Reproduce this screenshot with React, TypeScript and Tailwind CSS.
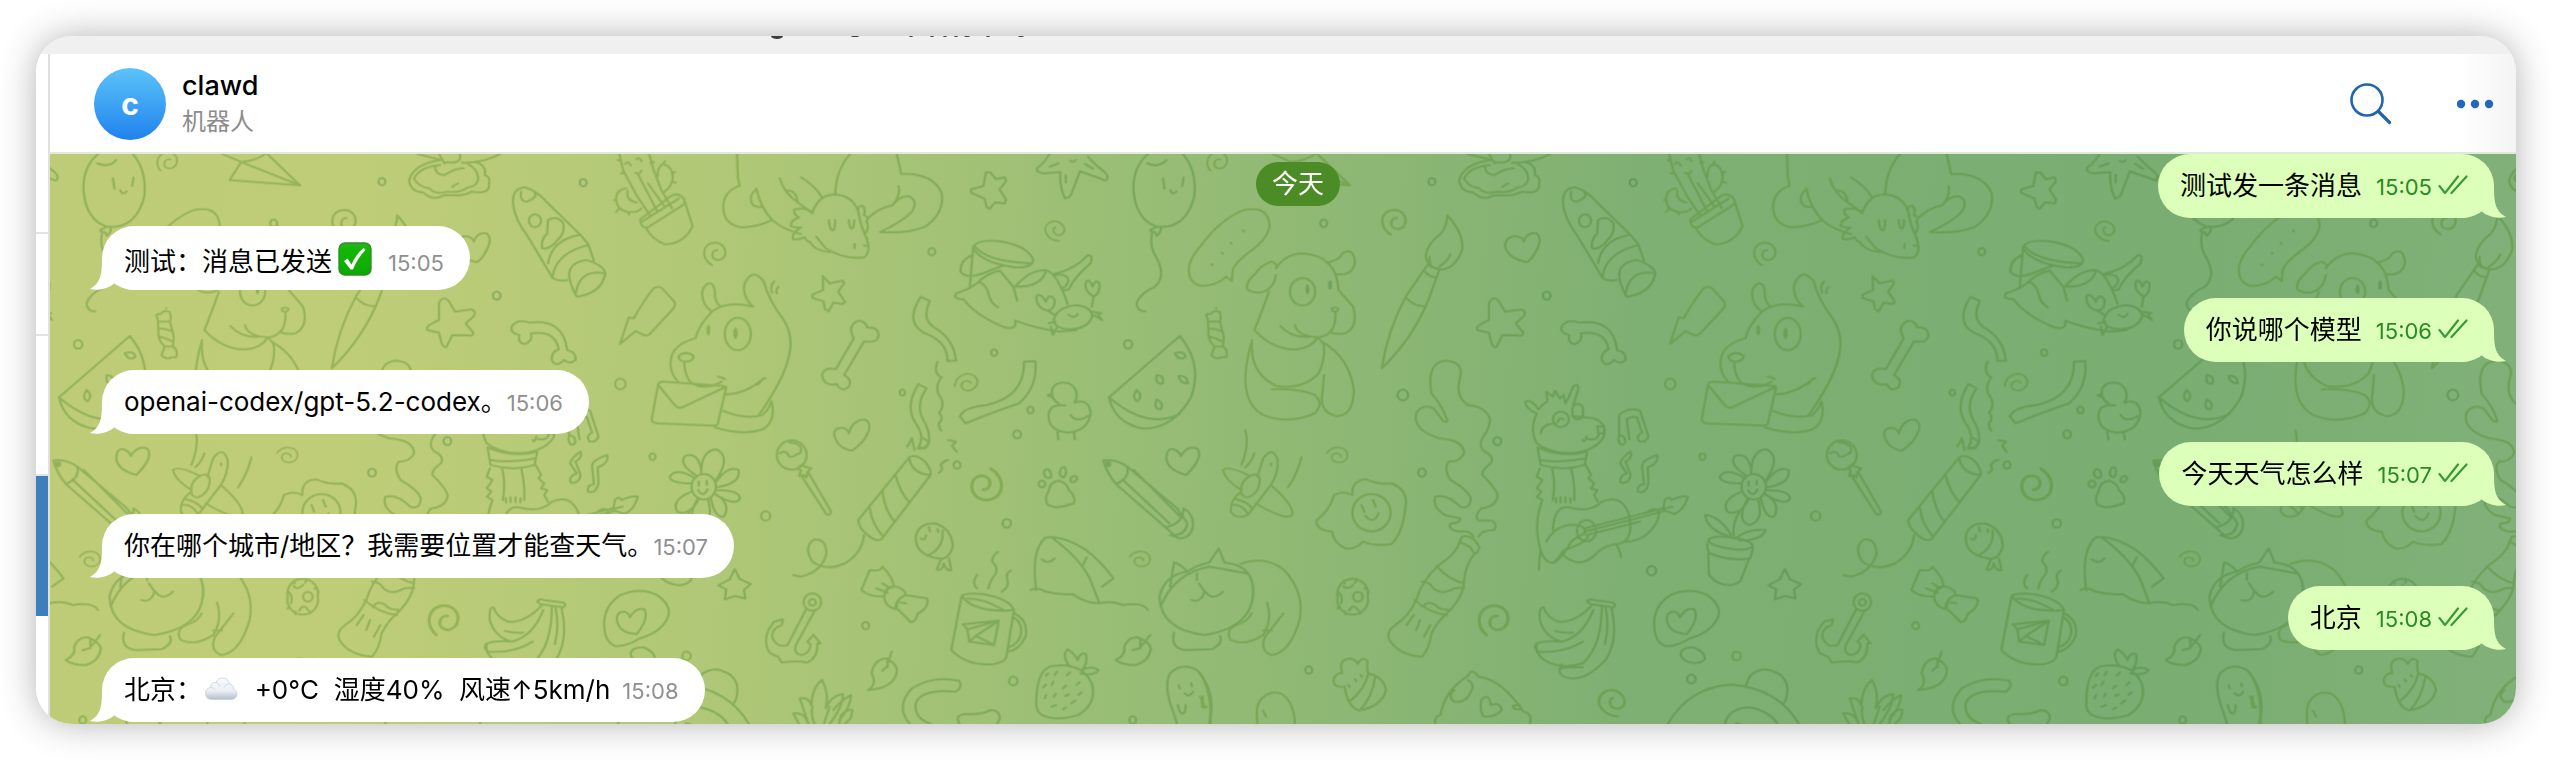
import type { ReactNode } from 'react';
import { clsx } from 'clsx';

type Message = {
  id: number;
  out?: boolean;
  time: string;
  body: ReactNode;
  // a closing full stop already brings its own space before the time
  tight?: boolean;
};

function CheckEmoji() {
  return (
    <svg role="img" aria-label="✅" viewBox="0 0 34 34" className="mr-1 ml-1.5 inline-block size-[34px] align-[-5px]">
      <defs>
        <linearGradient id="check-fill" x1="0" y1="0" x2="0" y2="1">
          <stop offset="0" stopColor="#2fae2a" />
          <stop offset="0.2" stopColor="#12b800" />
          <stop offset="1" stopColor="#0ea800" />
        </linearGradient>
      </defs>
      <rect x="1" y="1" width="32" height="32" rx="6" fill="url(#check-fill)" stroke="#2c8f2a" strokeWidth="1.4" />
      <path d="M6 19L9.500 16.500L13.500 22.500C16.500 15.500 20.500 10 25.500 6L27.500 8C22 13.500 18 20 15 27.500H12.500Z" fill="#fff" />
    </svg>
  );
}

function CloudEmoji() {
  return (
    <svg role="img" aria-label="☁️" viewBox="0 0 34 24" className="mx-0.5 inline-block h-6 w-[34px] align-[-2px]">
      <defs>
        <linearGradient id="cloud-fill" x1="0" y1="0" x2="0" y2="1">
          <stop offset="0" stopColor="#f8fafc" />
          <stop offset="0.6" stopColor="#eceff4" />
          <stop offset="1" stopColor="#b3bdcc" />
        </linearGradient>
      </defs>
      <path
        d="M8 22.500C3.500 22.500 1.500 20 1.500 16.500C1.500 13 3.500 11 6.500 10.500C6.500 7 9 5 12 5.500C13 2.500 15.500 1 18.500 1C22.500 1 25 3.500 25.500 7C29.500 7.500 29.500 10.500 29 12C31.500 12.500 33 14.500 33 17C33 20.500 30.500 22.500 27 22.500Z"
        fill="url(#cloud-fill)"
        stroke="#c9d0da"
        strokeWidth="0.8"
      />
      <path d="M12 5.500C14.500 6 15.500 7.500 15.500 9.500M25.500 7C23 6.500 20.500 8 20 10.500M6.500 10.500C8.500 10.500 10 11 11 13" fill="none" stroke="#d3d9e2" strokeWidth="1" />
    </svg>
  );
}

const MESSAGES: Message[] = [
  { id: 1, out: true, time: '15:05', body: '测试发一条消息' },
  { id: 2, time: '15:05', body: <>测试：消息已发送<CheckEmoji /></> },
  { id: 3, out: true, time: '15:06', body: '你说哪个模型' },
  { id: 4, time: '15:06', body: 'openai-codex/gpt-5.2-codex。', tight: true },
  { id: 5, out: true, time: '15:07', body: '今天天气怎么样' },
  { id: 6, time: '15:07', body: '你在哪个城市/地区？我需要位置才能查天气。', tight: true },
  { id: 7, out: true, time: '15:08', body: '北京' },
  { id: 8, time: '15:08', body: <>北京：<CloudEmoji />{'  +0°C  湿度40%  风速↑5km/h'}</> },
];

// Wallpaper doodles. One tile is 2744 units wide and repeats sideways.
const TILE = 2744;

const DOODLES: { x: number; y: number; d: string[] }[] = [
  {
    x: 0,
    y: 0,
    d: [
      // cactus
      'M50 40L60 90L95 165L130 225M128 40L140 90L160 150L188 205M68 145Q40 150 42 180Q45 212 75 216Q100 218 108 205M72 152Q66 180 95 188M150 110Q150 80 165 72Q190 78 190 112Q188 140 168 155M100 105L150 215M125 130L168 198M65 72Q74 60 80 76M92 98Q102 106 108 92M95 58Q104 48 108 64M36 180h8M48 208l-6 8M75 216v8M188 100l8-4M190 125l8 3M165 72l4-8M46 60l8 3M55 100l8 0M132 70l8-4',
      'M105 238L185 168Q205 155 220 178Q225 190 214 197L125 262Q106 266 105 238ZM108 246L205 176M120 264Q135 298 170 313Q220 312 242 258L222 188',
      // axolotl
      'M358 40L360 110L365 137Q320 155 322 205Q325 255 370 262Q410 262 450 240M408 145Q420 205 450 240Q480 270 525 282M410 148Q390 160 395 185Q400 205 425 200M470 115Q480 160 520 190L555 220M525 112Q565 140 580 172M490 152Q512 150 516 184M615 165Q615 90 655 40M775 40L787 102Q870 98 893 160Q900 220 850 260Q800 282 732 276Q790 245 815 215Q832 185 810 170Q785 165 765 195Q725 205 700 235M780 138Q786 165 765 195',
      'M555 218Q570 165 612 163Q660 165 675 215Q680 255 695 290Q710 335 690 352Q640 360 590 325L565 290M555 218Q540 200 508 208Q505 225 520 232Q498 240 498 258Q515 265 525 262Q500 280 504 297Q520 300 535 292Q540 305 548 305Q560 332 600 336M598 240Q600 275 610 270Q616 260 614 240M650 240Q652 270 660 265Q665 255 664 240M675 215Q670 200 685 197Q695 205 690 225Q704 232 696 245Q705 260 694 278M665 312v12M690 316l6 2',
      // stars
      'M1008 98L1020 97L1034 117L1058 112L1061 124L1044 148L1061 178L1058 190L1032 187L1018 207L1010 200L1005 176L970 158L970 148L1002 138Z',
      'M582 408L600 430L634 422L638 430L622 455L640 485L634 492L610 488L597 514L588 508L584 484L555 474L555 464L583 450Z',
      // starfish
      'M1175 40Q1165 65 1142 84Q1138 98 1160 100L1203 96Q1200 140 1215 175Q1230 172 1232 160L1254 94Q1300 112 1322 122Q1332 110 1320 98Q1290 70 1275 50M1175 80L1198 70M1217 105v22M1288 86L1268 72M1228 62Q1236 70 1243 60',
      // balloon
      'M1432 42Q1392 80 1394 150Q1400 240 1455 260Q1530 270 1553 170Q1560 90 1523 42M1430 70Q1460 85 1480 60M1471 115L1475 146M1525 113L1521 138M1490 150Q1496 168 1507 154M1455 260L1438 270Q1440 278 1450 276L1455 287Q1468 275 1465 260M1442 282Q1435 320 1455 355Q1480 410 1450 440Q1410 460 1402 490Q1404 515 1425 514',
      // lightning
      'M52 612L75 532L88 535Q115 480 140 445Q155 435 165 448L194 485Q198 495 192 505L130 582Q120 590 108 582L93 573Z',
      // dog with letter
      'M205 727Q175 690 188 645Q200 610 250 594Q255 560 292 515Q330 480 400 500M292 515Q262 490 268 450Q280 420 295 435Q302 450 300 470Q305 495 318 500M400 500Q370 470 378 430Q400 380 428 425Q440 480 480 540Q505 585 495 640Q485 710 415 825M205 648Q225 630 245 648Q240 668 218 664Q205 660 205 648ZM220 666Q220 700 235 725Q270 755 318 725M308 710Q320 712 326 718M330 763Q380 762 428 715L432 716M410 734L418 728M450 458Q442 440 455 424M462 460Q458 450 466 440',
      'M326 582A33 47 0 1 0 394 582A33 47 0 1 0 326 582M135 838L152 732Q155 725 165 725L325 738Q332 740 328 750L308 850Q305 858 296 857L150 850Q135 848 135 838ZM152 735L195 795Q205 808 218 800L326 742M322 813Q380 840 425 825Q440 810 448 784Q460 840 430 865Q380 890 300 862',
      // bone
      'M663 595Q645 560 672 543Q692 540 698 562Q728 560 728 588Q724 610 690 604L638 705Q660 720 650 740Q632 760 618 732Q585 740 580 705Q585 680 616 688Z',
      // heart
      'M612 885Q612 860 635 864Q648 868 650 880Q660 840 690 838Q708 845 702 872Q690 910 658 932Q620 925 612 885Z',
      // tambourine fox
      'M975 320Q990 295 1050 305Q1120 320 1132 360Q1130 385 1085 382Q1000 370 975 325ZM978 318Q1010 365 1125 370M975 325L966 445M972 346Q940 360 942 395Q955 418 1000 400L1055 376M930 462Q920 475 950 478Q985 530 1060 563Q1090 570 1085 542Q1140 565 1200 575L1245 570M930 460Q960 450 985 430Q1010 400 1045 392L1080 440L1090 482M990 425Q1010 435 1015 460Q1020 490 1040 502M1085 440Q1120 390 1165 390Q1195 400 1222 492M1085 440Q1150 442 1165 395M1185 402Q1240 390 1275 345Q1290 345 1282 370Q1240 410 1225 448L1210 452M1190 405Q1220 400 1224 420Q1220 440 1208 445',
      'M1185 540Q1195 500 1245 495Q1285 500 1286 530Q1275 565 1230 568Q1190 568 1185 540ZM1225 524Q1238 538 1248 522M1188 525L1170 512Q1140 505 1140 470Q1150 455 1165 485Q1175 455 1188 480Q1190 505 1172 512M1285 500L1290 470Q1262 450 1270 425Q1280 415 1287 440Q1295 415 1305 430Q1308 460 1290 470M1286 515L1310 520M1290 525L1312 540L1300 520M1190 545L1172 550M1195 560L1183 585L1178 560',
      // ribbons
      'M838 470L862 483Q840 535 870 560Q925 595 930 662L908 663Q908 610 860 585Q790 555 838 470Z',
      'M832 732L853 745Q820 800 850 850Q870 900 850 925L832 922Q850 890 825 850Q795 800 832 732ZM882 665Q870 700 892 712Q870 745 892 775Q900 800 886 818Q900 835 885 850Q886 865 892 872',
      'M1108 665L1137 663Q1145 740 1095 790Q1030 815 955 850L940 828Q955 800 1010 795Q1110 770 1108 665Z',
      // chick
      'M1198 790Q1175 775 1182 745Q1195 722 1225 730Q1250 745 1245 775L1240 788Q1280 775 1282 820Q1275 875 1220 878Q1170 870 1172 825Q1175 790 1215 796M1182 762L1170 766L1182 772M1230 825Q1245 850 1275 828M1195 876L1198 898M1238 876L1241 898',
      // watermelon
      'M1515 588L1330 772Q1345 850 1420 866Q1500 865 1545 770Q1575 670 1515 588ZM1330 772Q1430 870 1515 822M1502 640Q1525 630 1530 650Q1515 665 1502 640ZM1455 705Q1475 705 1470 730Q1450 735 1455 705ZM1512 708Q1535 705 1536 730Q1515 730 1512 708ZM1402 750Q1420 765 1405 784Q1388 775 1402 750ZM1455 778Q1475 790 1465 808Q1445 808 1455 778Z',
    ],
  },
  {
    x: 0,
    y: 900,
    d: [
      // lollipop
      'M462 45A39 44 0 1 0 540 45A39 44 0 1 0 462 45M470 40Q480 30 490 40Q495 60 515 42Q530 40 524 20Q510 5 495 8M515 85L525 92L520 108L532 105L540 112L542 96L552 85L535 80L528 74ZM528 110L590 220Q600 232 604 215L545 98',
      // firecracker
      'M675 240L808 52Q825 40 850 65Q870 95 862 108L735 298Q720 308 695 280Q675 260 675 240ZM808 55Q815 100 862 105M772 105Q785 160 810 188M738 155Q745 215 770 245M705 205Q710 250 740 290M690 285Q685 340 640 370Q590 395 555 365Q530 320 560 298Q590 295 592 340Q580 395 525 410L505 405M803 20L815 -5L822 30M830 25Q850 30 860 5L845 -5M910 0L930 5L920 18L932 35M885 98Q900 90 890 75Q900 60 910 60',
      // beetle
      'M825 300Q825 250 875 250Q920 265 922 320Q915 350 895 357Q830 350 825 300ZM895 272Q900 320 860 345M838 295Q850 305 852 285M860 262l2 12M882 268l2 8M892 355L880 388Q895 395 898 370Q905 395 918 390L912 355',
      // bow
      'M683 450L705 390Q735 395 738 380Q765 410 768 440Q750 440 742 470Q700 470 683 450ZM742 470Q745 435 775 440Q800 450 798 465Q770 480 772 507Q745 500 742 470ZM798 465L855 475Q862 500 830 522Q825 545 812 547Q790 520 775 505Q775 475 798 465M722 445L752 458M738 430L758 445M785 488L800 490',
      // anchor
      'M532 486A23 26 0 1 0 578 486A23 26 0 1 0 532 486M546 487A9 10 0 1 0 564 487A9 10 0 1 0 546 487M540 505L490 615Q460 625 450 590Q448 565 475 555L478 538L455 545L440 570Q425 610 445 640L465 650L475 668Q520 660 540 668Q570 655 568 610L576 610L558 584L542 605L550 612Q550 640 525 645Q505 640 512 615L562 510',
      // steaming mug
      'M945 468L918 630Q960 680 1030 672Q1060 665 1062 650L1082 510Q1070 475 1000 462Q955 458 945 468ZM945 468Q980 520 1078 510M960 475Q1000 475 1052 508M1082 520Q1120 540 1112 590Q1095 630 1066 635M1078 530Q1105 545 1100 585Q1090 615 1068 622M948 553L1042 542L1030 615L965 605L960 568ZM960 568L1042 542L982 588L965 605M982 588L1030 615M985 445Q970 430 985 405M1015 445Q1020 420 1035 400Q1040 380 1025 365Q1025 345 1040 336M1050 455Q1070 440 1065 420Q1058 400 1074 392',
      // leaves
      'M700 750Q725 735 710 700Q715 660 745 655Q780 670 775 700Q765 745 700 750ZM762 635L750 680L738 692M750 655L752 682',
      'M1348 660Q1375 645 1370 620Q1380 590 1405 592Q1435 605 1440 625Q1435 665 1400 675Q1365 675 1348 660ZM1438 585L1410 625L1392 630M1412 600L1412 625',
      // pineapple top
      'M520 852L505 820Q535 815 545 852L522 775Q545 770 552 795Q555 740 580 720Q600 760 590 805Q605 765 635 762Q635 800 600 852M585 852L600 800M610 810Q630 780 656 765Q655 800 625 840M625 852L630 825Q650 805 660 810L655 835L640 852M560 852Q550 820 555 800',
      // candy cane
      'M865 852Q820 835 825 790Q840 745 930 755Q950 740 938 722Q870 705 815 745Q770 800 810 852M940 852Q925 825 955 822Q1000 825 1020 810Q1045 810 1045 835L1038 852',
      // strawberry
      'M1140 790Q1140 690 1180 678Q1260 665 1285 730Q1300 790 1250 825Q1190 845 1155 825Q1140 815 1140 790ZM1228 680Q1205 645 1222 628Q1240 640 1248 660Q1255 635 1270 642Q1275 670 1260 690Q1285 675 1303 690Q1295 708 1255 700M1165 708l6-8M1188 705l6-10M1220 706l8-9M1158 742l8-8M1180 735l5-10M1210 745l8-8M1245 735l8-8M1162 775l4-10M1186 770l5-9M1215 768l10-5M1250 765l8-8M1180 800l12-5M1210 808l8-6M1232 790l10-8',
      // paw
      'M1170 195Q1160 175 1172 155Q1175 125 1200 122Q1222 130 1225 150Q1245 170 1238 190Q1215 200 1190 202ZM1160 102Q1160 85 1172 88Q1182 98 1178 112Q1165 118 1160 102ZM1202 95Q1205 78 1215 82Q1222 100 1212 112Q1200 110 1202 95ZM1230 115Q1242 100 1247 115Q1242 130 1230 125ZM1146 132A9 10 0 1 0 1164 132A9 10 0 1 0 1146 132',
      // pencil
      'M1315 62Q1345 55 1378 80L1508 205L1535 250Q1530 285 1500 285L1478 262L1348 132Q1325 100 1315 62ZM1378 80Q1385 115 1348 132M1365 118L1488 250M1395 90L1515 228M1478 262Q1525 250 1525 205Q1550 220 1550 255Q1545 295 1515 295L1490 285',
      // heart
      'M1480 58Q1480 22 1500 28Q1515 35 1518 48Q1535 15 1560 25Q1580 50 1532 105Q1485 90 1480 58Z',
      // tent
      'M1140 450Q1125 330 1165 292Q1210 285 1270 330Q1310 365 1342 415L1312 440M1180 292Q1250 350 1280 415L1305 490M1125 450Q1145 440 1165 455Q1200 465 1235 462Q1270 490 1305 490Q1340 480 1365 495Q1420 485 1432 510M1155 358Q1170 375 1188 355M1262 375L1272 352',
      // sleeping cat
      'M1490 440L1500 368Q1515 370 1535 395Q1560 375 1592 368L1617 325L1632 368Q1700 375 1706 440Q1715 560 1580 585Q1465 570 1462 470Q1475 405 1535 395M1465 500Q1500 400 1592 380L1690 400M1545 480Q1570 490 1580 455L1565 430M1582 455Q1600 485 1628 455M1560 400v20M1500 578Q1490 625 1530 630L1600 627Q1630 610 1620 588',
      // ghost
      'M1508 852Q1500 820 1490 790Q1475 730 1490 700Q1520 665 1560 690Q1600 740 1598 810L1592 852M1510 795Q1515 825 1525 820Q1532 810 1530 795M1512 735l3 10M1545 730l2 8M1528 760Q1540 775 1550 755M1575 770Q1570 810 1585 800',
    ],
  },
  {
    x: 1568,
    y: 0,
    d: [
      // paper plane
      'M392 136L208 120L238 66ZM392 136L305 40M238 66Q280 60 300 42M238 66L190 42',
      // loaf
      'M0 320Q55 235 115 210Q180 195 182 260Q175 300 130 335Q85 375 85 395L83 423L68 410Q40 440 0 437Q-35 425 -28 375Q-20 345 0 320ZM112 271l3 3M80 308l3 3M57 338l3 3M30 373l3 3',
      // sweet
      'M20 535Q10 520 28 522Q35 510 50 515Q58 530 52 545L62 590L60 620Q75 630 68 652Q55 650 50 655Q35 655 30 645Q35 630 38 620Q20 600 22 575ZM22 545L52 545M22 565Q40 565 60 575M25 590Q45 595 60 605M38 620L60 620',
      // sitting dog
      'M198 385Q225 340 270 340Q315 345 332 368M198 385Q205 370 185 365Q160 375 145 400Q115 430 125 450Q160 470 185 440Q195 430 198 405M332 368Q365 360 372 340Q400 320 405 365Q400 410 355 402M332 368Q358 390 362 450Q385 480 400 500Q415 560 380 580Q350 585 340 575Q355 560 354 520M180 455Q160 520 142 570Q190 630 250 628Q290 625 308 592M345 505Q360 500 362 508Q355 520 345 512ZM248 555Q255 590 310 592Q330 590 345 570M210 558Q240 595 285 590M136 610Q130 700 200 738Q270 750 310 700Q330 650 322 610L308 592M136 600Q90 780 165 825Q230 855 300 820Q325 790 300 765Q260 745 188 748M318 605Q390 650 402 750Q400 830 355 828Q310 815 320 760L324 705M235 455A33 41 0 1 0 301 455A33 41 0 1 0 235 455',
      // brush
      'M646 226Q690 280 685 330Q665 390 628 388Q590 380 590 345Q595 310 630 280Q645 260 646 226ZM605 382Q598 360 600 350M625 380Q650 360 654 342M594 375L625 390L622 400L600 470Q560 590 475 685Q490 570 540 465L585 390ZM585 392Q600 412 618 412M540 475Q560 500 586 498',
      // heart, star
      'M797 320Q797 290 825 288Q845 292 846 305Q855 275 880 280Q895 295 882 325Q865 365 852 366Q805 355 797 320Z',
      'M755 490Q765 465 780 482L797 515L840 508Q855 515 845 530L825 550L845 578Q845 590 830 586L790 585L775 620Q768 625 762 610L755 578L725 570Q720 560 735 552L755 540Z',
      // canelloni
      'M950 200Q942 145 980 142Q1010 150 1040 190L1125 285L1145 312L1160 362M950 200Q955 240 985 285L1050 410M970 155Q965 185 985 185Q1015 170 1005 158M990 242A16 19 0 1 0 1022 242A16 19 0 1 0 990 242M1040 240Q1065 225 1080 250Q1085 280 1065 300Q1045 330 1025 325Q1020 300 1038 280ZM1040 370Q1050 300 1120 285M1052 410Q1060 340 1145 315M1050 412Q1065 425 1090 420M1095 400Q1100 365 1140 360Q1185 375 1190 400Q1180 460 1115 470Q1095 430 1095 400ZM1190 400Q1120 385 1112 465',
      // curved bone
      'M992 548Q1080 535 1090 630Q1115 635 1112 660Q1095 675 1082 660Q1060 685 1050 660Q1048 635 1068 628Q1060 570 996 580Q1000 605 980 612Q960 610 965 585Q940 580 945 560Q960 535 992 548Z',
      // smoke
      'M645 838Q650 850 635 842L610 805Q580 790 565 820Q555 870 625 895Q690 900 690 940Q680 965 650 965Q635 985 655 1020Q700 1050 708 1075Q705 1110 680 1100Q645 1060 615 1070Q605 1100 640 1125L680 1135Q680 1150 655 1150Q645 1170 680 1175Q705 1170 715 1190M645 838Q635 800 605 760Q590 670 640 662Q690 665 680 710Q665 770 700 795Q750 800 758 840Q755 870 740 890Q725 920 745 935Q770 950 760 970Q735 990 738 1005Q770 1040 778 1065Q775 1100 735 1105Q715 1130 728 1142L760 1142Q780 1150 768 1170Q735 1170 728 1190',
      // llama with guitar
      'M880 820Q860 870 880 910Q920 945 985 938Q1040 925 1055 890Q1065 850 1030 835L975 828M880 820Q850 805 850 785Q865 775 885 808Q895 790 908 785L905 755L922 770L928 752L940 775L950 765L955 790M958 785L975 740Q990 725 988 750L975 795M922 838A20 22 0 1 0 964 838A20 22 0 1 0 922 838M974 815A14 17 0 1 0 1000 815A14 17 0 1 0 974 815M935 845Q940 830 950 838M890 880Q895 850 930 850M1010 890Q1005 910 1000 900M1008 895Q1035 905 1042 885L1038 858M1042 860h14v20h-12',
      'M882 922Q950 955 1012 935L1005 975Q950 995 890 975ZM890 960Q950 970 1005 955M920 985Q930 1030 922 1080M970 985Q980 1030 978 1080M930 1075v12M942 1072v14M955 1072v14M968 1075v12M888 985L880 1010L895 1020L880 1045L892 1055L880 1070L895 1080M1008 975L1022 1005L1015 1015L1030 1030L1022 1045L1038 1050L1030 1065L1040 1085M895 1080Q870 1150 890 1230Q885 1270 886 1288M890 1230Q900 1270 925 1268Q940 1250 950 1230Q1000 1215 1015 1190',
      'M922 1170Q925 1095 965 1102Q1020 1120 1050 1085Q1100 1060 1120 1120Q1135 1195 1100 1210Q1060 1215 1040 1235Q1010 1275 980 1265Q955 1255 950 1245M905 1205Q930 1150 985 1155Q1010 1160 1005 1180Q985 1190 970 1205Q950 1250 925 1268M985 1172A25 32 0 1 0 1035 1172A25 32 0 1 0 985 1172M1005 1165L1210 1105M1005 1175L1215 1113M1010 1185L1150 1145M1165 1120Q1190 1095 1200 1120Q1195 1160 1165 1185Q1140 1205 1110 1205M1200 1110L1235 1100M1215 1080Q1225 1065 1232 1080Q1260 1065 1275 1070Q1265 1110 1240 1122L1210 1110ZM1088 1215Q1098 1230 1100 1252',
      // notes
      'M1095 885Q1105 885 1110 895Q1115 915 1100 914Q1090 900 1095 890L1095 825Q1120 800 1150 812L1172 890Q1165 908 1148 904Q1138 885 1155 878L1142 832Q1125 828 1115 838L1122 898',
      'M1098 970Q1100 955 1125 935Q1132 950 1112 965L1125 1005Q1122 1032 1100 1028Q1092 1010 1115 1000ZM1155 978Q1155 960 1195 945Q1200 970 1170 982L1172 1030Q1165 1062 1145 1055Q1140 1035 1160 1032Z',
      // mushroom cap
      'M700 42L755 58M915 42Q870 70 815 68M755 42L770 70M810 42Q815 65 790 68Q760 65 770 70M760 60Q690 70 677 120Q680 155 715 158Q740 185 770 165Q820 170 840 155Q890 165 886 130Q890 110 875 105Q880 75 850 65M758 75Q705 80 690 115Q700 140 730 145Q745 165 775 155Q810 160 830 142Q855 140 858 115Q855 85 830 72M745 80Q745 105 770 105Q800 82 820 85M790 140L805 130',
    ],
  },
  {
    x: 1568,
    y: 900,
    d: [
      // plane
      'M60 90Q75 75 130 108M60 90Q65 120 108 150M108 150Q105 125 130 108Q155 95 156 120Q155 160 125 172Q105 170 108 150M150 110L165 55Q190 15 203 60Q205 100 185 135L125 225Q95 240 80 215Q78 180 108 155M185 135Q240 190 242 220Q235 250 145 190M82 195Q110 190 125 222M95 178Q125 185 138 208M118 -30Q130 10 108 75M142 40Q135 65 118 82M265 52Q255 100 230 142M186 70v6',
      // fried egg
      'M398 165Q395 120 435 118Q465 135 500 130Q545 150 537 200Q530 280 500 312Q460 320 425 305Q405 330 380 325Q350 310 345 275Q300 270 305 240Q340 210 350 165Q375 150 398 165ZM398 218A50 56 0 1 0 498 218A50 56 0 1 0 398 218M422 195l7 20M452 180l7 20M432 228Q455 255 466 220',
      // cat back and legs
      'M105 372Q170 345 220 390Q275 460 260 540Q235 640 185 645Q155 630 170 590L218 520M175 488Q190 540 165 585Q120 620 80 600Q65 570 95 555Q125 545 135 520M165 572L188 572',
      // ladybird
      'M360 470A40 44 0 1 0 438 470A40 44 0 1 0 360 470M375 438Q385 452 400 435M362 455Q375 470 368 490M400 470A12 14 0 1 0 425 470A12 14 0 1 0 400 470M390 512Q400 490 412 508M378 430l-2-8M405 428l4-8M430 445Q445 448 438 462M365 500l-6 6M380 515l0 8M415 512l4 8',
      // bottle
      'M685 290Q710 280 730 320Q728 335 718 342L705 320L678 305ZM678 308Q670 340 625 375Q580 420 565 480Q545 530 510 555Q485 575 495 600Q520 645 580 650Q600 625 605 580Q620 545 645 520Q690 470 690 420Q695 370 718 340M618 378Q650 420 690 430M580 425Q600 425 610 445Q630 465 655 450Q670 440 690 445M560 480Q600 520 645 525M582 500Q595 480 615 495Q625 510 655 510M540 555L558 525M565 570L575 540M585 590L602 555',
      // bananas
      'M1012 485Q1015 475 1030 480L1080 488Q1090 495 1080 502L1020 492ZM1025 495Q980 550 935 545Q905 530 898 502Q885 500 888 540Q900 590 945 605Q1000 590 1028 510M928 573Q950 580 975 578M945 605Q900 600 878 612Q870 625 885 635Q950 640 1000 605M880 615Q875 640 900 660Q940 690 1000 670Q1050 620 1050 500M1075 502Q1095 600 1060 660Q1010 720 970 715Q935 710 940 685Q970 680 1000 682M940 685L945 672M1060 505Q1070 560 1058 612',
      // flower pot
      'M1415 140A32 38 0 1 0 1479 140A32 38 0 1 0 1415 140M1440 102Q1440 30 1480 28Q1520 50 1480 118M1425 105Q1380 70 1398 48Q1430 35 1440 85M1415 130Q1360 130 1358 110Q1375 80 1425 115M1415 155Q1360 180 1378 215Q1410 230 1435 175M1430 178Q1400 240 1435 255Q1475 245 1458 178M1465 172Q1475 235 1500 230Q1520 190 1475 160M1480 150Q1540 150 1542 175Q1530 200 1480 165M1480 125Q1510 75 1538 90Q1545 130 1482 142M1434 125v12M1455 122v12M1432 150Q1445 175 1457 148M1410 215Q1390 250 1395 290M1385 290Q1325 270 1320 225Q1355 225 1388 285M1400 295Q1430 265 1478 270Q1470 300 1410 302',
      'M1328 300Q1340 285 1385 292Q1440 300 1445 318Q1430 335 1380 325Q1330 315 1328 300ZM1326 310Q1325 330 1332 340Q1390 365 1438 355L1445 325M1328 342L1330 405Q1350 435 1385 436Q1412 430 1415 415L1434 358',
      // thought bubble
      'M1188 570Q1180 500 1230 465Q1280 440 1325 465Q1370 500 1350 540Q1330 580 1280 595Q1245 620 1215 618Q1190 605 1188 570ZM1220 540Q1218 515 1240 515Q1252 520 1254 532Q1270 500 1292 508Q1305 535 1272 582Q1225 580 1220 540ZM1256 640Q1260 620 1290 622Q1325 640 1318 660Q1300 675 1275 665Q1255 655 1256 640Z',
      // small star
      'M1528 387L1541 417L1570 432L1552 450L1556 476L1530 468L1502 478L1506 448L1485 436L1515 418Z',
      // bear
      'M1222 852Q1280 740 1390 734Q1510 745 1565 852M1428 735Q1435 690 1480 688Q1535 700 1535 750Q1535 775 1525 790M1372 852Q1380 805 1435 802Q1485 810 1510 852M1400 850l12 2',
      // bee
      'M378 740Q345 745 350 715Q360 695 372 700Q360 660 390 655Q410 660 412 672Q425 645 438 665Q435 690 440 700Q480 710 486 750Q475 800 415 811Q385 800 378 740ZM440 700Q430 750 390 785M458 710Q450 770 420 808M388 735l3 6M405 718l3 6M420 705l3 5',
      // pudding
      'M615 852Q610 830 628 825Q640 750 700 708Q710 680 728 710Q790 720 845 815Q870 820 862 852M700 720Q720 735 708 755Q695 790 665 785Q645 770 665 750M735 780Q755 755 760 795Q785 785 788 810Q770 835 740 828Q730 810 735 780ZM818 800Q815 795 835 795L840 808Q820 810 818 800Z',
      // ghost
      'M150 852Q145 800 155 785Q175 750 210 760Q245 780 248 852M165 812l8 18M0 700Q30 750 28 852M0 770Q20 810 5 800',
    ],
  },
];

const SPECKS: [number, number, number][] = [
  [867, 335, 9], [1030, 638, 8], [790, 758, 7], [1125, 810, 8], [1090, 883, 10], [1380, 613, 11], [53, 732, 14],
  [137, 950, 8], [433, 1128, 12], [933, 975, 9], [1063, 1150, 11], [694, 1457, 9], [1080, 1623, 11], [226, 1548, 11],
  [1392, 1740, 9], [1891, 250, 9], [2174, 125, 9], [2700, 128, 9], [2474, 467, 10], [2098, 765, 14], [2345, 903, 10],
  [2148, 998, 10], [1852, 1590, 9], [2748, 1292, 12], [2852, 1617, 11],
];

// x, y, scale, turn
const SPIRALS: [number, number, number, number][] = [
  [300, 340, 1, 0], [1190, 272, 0.9, -30], [958, 728, 0.9, 60], [1010, 1035, 1.4, 180], [1412, 1257, 0.8, 90],
  [1613, 65, 0.9, 20], [2075, 245, 1.1, 0], [1928, 945, 0.8, 90], [2335, 1440, 1.35, 10], [2646, 1688, 1.2, -30],
];

const PUPILS: [number, number, number, number][] = [
  [354, 580, 6, 17], [283, 570, 5, 15], [1849, 448, 5, 14], [1908, 435, 5, 14], [1327, 972, 9, 9], [1610, 505, 3, 3],
];

function Wallpaper() {
  return (
    <svg aria-hidden="true" className="absolute inset-0 size-full">
      <defs>
        <linearGradient id="doodle-ink" gradientUnits="userSpaceOnUse" x1="0" y1="0" x2={TILE} y2="0">
          <stop offset="0" stopColor="#4a8212" />
          <stop offset="1" stopColor="#2a7030" />
        </linearGradient>
        <g id="doodles" fill="none" stroke="url(#doodle-ink)" strokeLinecap="round" strokeLinejoin="round" strokeWidth="6">
          {DOODLES.map((group) => (
            <g key={`${group.x}-${group.y}`} transform={`translate(${group.x} ${group.y})`}>
              {group.d.map((d) => (
                <path key={d} d={d} />
              ))}
            </g>
          ))}
          {SPECKS.map(([x, y, r]) => (
            <ellipse key={`${x}-${y}`} cx={x} cy={y} rx={r} ry={r + 2} />
          ))}
          {SPIRALS.map(([x, y, s, turn]) => (
            <path
              key={`${x}-${y}`}
              transform={`translate(${x} ${y}) scale(${s}) rotate(${turn})`}
              d="M-8 35C-38 15-34-32 2-32C34-30 36 20 8 20C-12 18-10-10 6-10"
            />
          ))}
          {PUPILS.map(([x, y, rx, ry]) => (
            <ellipse key={`${x}-${y}`} cx={x} cy={y} rx={rx} ry={ry} fill="url(#doodle-ink)" stroke="none" />
          ))}
        </g>
      </defs>
      <g transform="translate(550 -14) scale(0.38265 0.33333)" opacity="0.32">
        <use href="#doodles" x={-TILE} />
        <use href="#doodles" />
        <use href="#doodles" x={TILE} />
      </g>
    </svg>
  );
}

function Tail({ out }: { out?: boolean }) {
  return (
    <svg
      aria-hidden="true"
      viewBox="0 0 44 32"
      className={clsx('absolute bottom-0 h-8 w-11', out ? '-right-3 -scale-x-100 text-[#dcffba]' : '-left-3 text-white')}
    >
      <path d="M12 0C12 16 11 25 0 31C8 33 18 31 25 25Q34 32 44 32V0Z" fill="currentColor" />
    </svg>
  );
}

function Ticks() {
  return (
    <svg role="img" aria-label="已读" viewBox="0 0 30 20" className="ml-1.5 h-5 w-[30px]" fill="none" stroke="#3a9a35" strokeWidth="2.200" strokeLinecap="round" strokeLinejoin="round">
      <path d="M1.500 11L7 18L20 1.500M13.500 18L28.500 1.500" />
    </svg>
  );
}

function Bubble({ message }: { message: Message }) {
  const { out, tight, time, body } = message;
  return (
    <li className={clsx('flex', out ? 'justify-end' : 'justify-start')}>
      <div className={clsx('relative flex h-16 items-baseline rounded-[32px] pt-4 pr-[26px] pl-[22px]', out ? 'bg-[#dcffba]' : 'bg-white')}>
        <Tail out={out} />
        <p className="relative text-[26px] leading-8 whitespace-pre text-black">{body}</p>
        <span
          className={clsx(
            'relative flex items-baseline text-[22px] leading-8',
            out ? 'text-[#2a8a22]' : 'text-[#8f8f8f]',
            !tight && (out ? 'ml-3.5' : 'ml-3'),
          )}
        >
          <time>{time}</time>
          {out && <Ticks />}
        </span>
      </div>
    </li>
  );
}

// Row edges of the chat list that show beside the open chat
function ListEdge() {
  return (
    <aside className="flex w-3 shrink-0 flex-col bg-white">
      <div className="h-[180px] border-b-2 border-[#e4e4e4]" />
      <div className="h-[102px] border-b-2 border-[#e4e4e4]" />
      <div className="h-[140px] border-b-2 border-[#e4e4e4]" />
      <div className="h-[140px] bg-[#3d7ebd]" />
    </aside>
  );
}

function ChatHeader() {
  return (
    <header className="flex h-[100px] items-center border-b-2 border-[#e3e8dc] bg-[linear-gradient(to_left,#f4f4f5,#ffffff_56px)] pt-[2px] pr-[22px] pl-11">
      <div className="flex size-[72px] items-center justify-center rounded-full bg-linear-to-b from-[#5cc3fa] to-[#1f82ec] text-[30px] font-bold text-white">
        c
      </div>
      <div className="ml-4">
        <h1 className="text-[27px] leading-9 font-medium text-black">clawd</h1>
        <p className="text-[24px] leading-9 text-[#8c8c8c]">机器人</p>
      </div>
      <div className="ml-auto flex items-center gap-16">
        <button type="button" aria-label="搜索">
          <svg viewBox="0 0 42 42" className="size-[42px]" fill="none" stroke="#2164b0" strokeWidth="2.600" strokeLinecap="round">
            <circle cx="17" cy="17" r="15.500" />
            <path d="M28.500 28.500L39.500 39.500" strokeWidth="3.200" />
          </svg>
        </button>
        <button type="button" aria-label="更多">
          <svg viewBox="0 0 38 10" className="h-[10px] w-[38px]" fill="#2267b8">
            <circle cx="5" cy="5" r="4.200" />
            <circle cx="19" cy="5" r="4.200" />
            <circle cx="33" cy="5" r="4.200" />
          </svg>
        </button>
      </div>
    </header>
  );
}

export default function App() {
  return (
    <div className="bg-white p-9 font-[Inter,'Noto_Sans_CJK_SC',sans-serif]">
      <main className="overflow-hidden rounded-[36px] bg-white shadow-[0_0_36px_rgba(0,0,0,0.3)]">
        <div className="h-[18px] bg-[#f0f0f0]">
          {/* feet of the window title, cut off by the top edge */}
          <svg aria-hidden="true" viewBox="0 0 300 4" className="ml-[734px] h-1 w-[300px]" fill="#3c3c3c">
            <ellipse cx="7" cy="0" rx="6" ry="3" />
            <ellipse cx="85" cy="0" rx="4" ry="1" />
            <ellipse cx="141" cy="0" rx="2" ry="1" />
            <ellipse cx="162" cy="0" rx="2" ry="1" />
            <ellipse cx="175" cy="0" rx="2" ry="1" />
            <ellipse cx="186" cy="0" rx="2" ry="1" />
            <ellipse cx="197" cy="0" rx="3" ry="1" />
            <ellipse cx="218" cy="0" rx="2" ry="1" />
            <ellipse cx="251" cy="0" rx="3" ry="1" />
          </svg>
        </div>
        <div className="flex">
          <ListEdge />
          <section className="min-w-0 flex-1 border-l-2 border-[#e0e0e0]">
            <ChatHeader />
            <div className="relative overflow-hidden bg-[linear-gradient(93deg,#becc78_0%,#bfcd78_12%,#b0c877_27%,#98bd75_44%,#7fb073_64%,#79ad72_85%,#81b178_100%)] pr-[22px] pb-[2px] pl-[52px]">
              <Wallpaper />
              <div className="relative">
                <ul className="flex flex-col gap-2">
                  {MESSAGES.map((message) => (
                    <Bubble key={message.id} message={message} />
                  ))}
                </ul>
                <div className="absolute inset-x-0 top-2 flex justify-center">
                  <span className="rounded-full bg-[#4b8c26] px-4 py-1.5 text-[26px] leading-8 text-white">今天</span>
                </div>
              </div>
            </div>
          </section>
        </div>
      </main>
    </div>
  );
}
